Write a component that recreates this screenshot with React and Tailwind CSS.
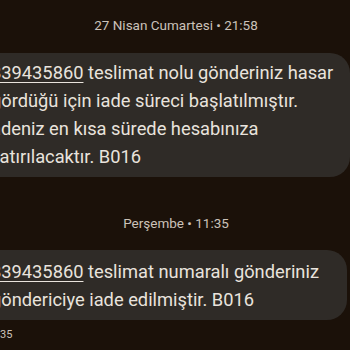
export default function App() {
  const font = { fontFamily: 'Roboto, "Noto Sans", sans-serif' };
  return (
    <div
      className="w-[350px] h-[350px] overflow-hidden bg-[#1b1109] flex flex-col pt-[17px]"
      style={font}
    >
      <div className="h-[16px] leading-[16px] text-[13.5px] text-center text-[#cbc2b9] pl-[2px]">
        27 Nisan Cumartesi • 21:58
      </div>
      <div className="mt-[20px] ml-[-30px] w-[380px] shrink-0 rounded-[20px] bg-[#2f2b27] pl-[21px] pt-[6px] pb-[6px] text-[18.3px] leading-[28px] text-[#e9e3dd] whitespace-nowrap">
        <span className="underline underline-offset-[3px] decoration-[1px]">839435860</span> teslimat nolu gönderiniz hasar
        <br />
        gördüğü için iade süreci başlatılmıştır.
        <br />
        <span className="ml-[-5px]">İadeniz</span> en kısa sürede hesabınıza
        <br />
        yatırılacaktır. B016
      </div>
      <div className="mt-[38px] h-[16px] leading-[16px] text-[13.5px] text-center text-[#cbc2b9] pl-[2px]">
        Perşembe • 11:35
      </div>
      <div className="mt-[19px] ml-[-30px] w-[377px] shrink-0 rounded-[20px] bg-[#2f2b27] pl-[21px] pt-[8px] pb-[6px] text-[18.3px] leading-[28px] text-[#e9e3dd] whitespace-nowrap">
        <span className="underline underline-offset-[3px] decoration-[1px]">839435860</span> teslimat numaralı gönderiniz
        <br />
        göndericiye iade edilmiştir. B016
      </div>
      <div className="mt-[8px] ml-[-15px] h-[14px] leading-[14px] text-[11px] text-[#cbc2b9]">
        11:35
      </div>
    </div>
  );
}
